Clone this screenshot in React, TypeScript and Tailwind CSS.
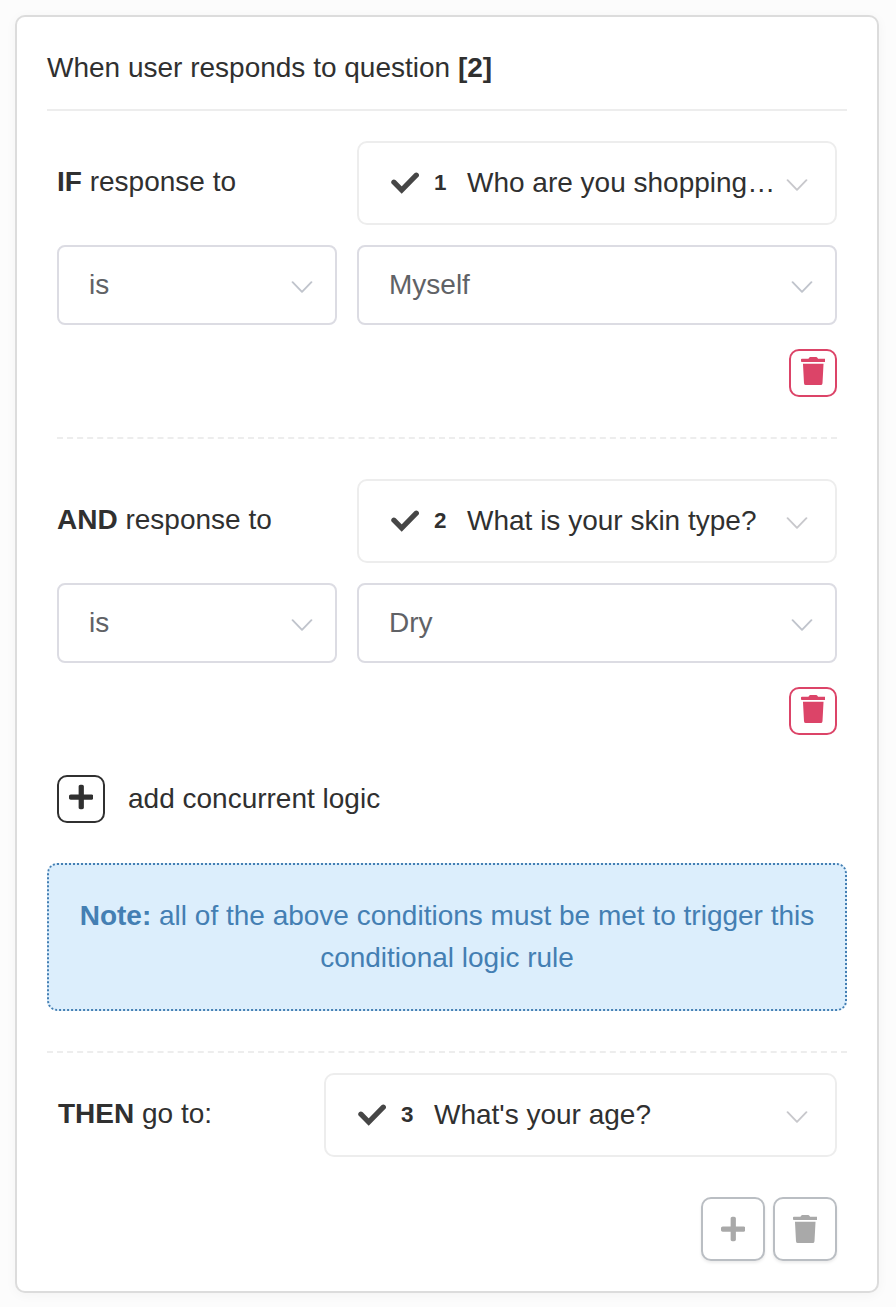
import type { ReactNode } from "react";
import { FaPlus } from "react-icons/fa";

function CheckIcon() {
  return (
    <svg viewBox="0 0 28 28" fill="none" className="size-7 shrink-0 text-[#464646]">
      <path d="M2.9 13.2L10.7 21L25.3 6.2" stroke="currentColor" strokeWidth="5.2" strokeLinecap="round" strokeLinejoin="miter" />
    </svg>
  );
}

function TrashIcon() {
  return (
    <svg viewBox="0 0 448 512" fill="currentColor" className="h-7 w-[24.5px] shrink-0">
      <path d="M16 32H136L152 8Q157 0 168 0H280Q291 0 296 8L312 32H432Q448 32 448 46V76Q448 90 432 90H16Q0 90 0 76V46Q0 32 16 32ZM36 122H412L393 478Q391 512 360 512H88Q57 512 55 478Z" />
    </svg>
  );
}

function Chevron({ className }: { className: string }) {
  return (
    <svg viewBox="0 0 22 12" fill="none" className={`h-3 w-[22px] shrink-0 ${className}`}>
      <path d="M1.6 1.2L11 10.8L20.4 1.2" stroke="currentColor" strokeWidth="1.9" strokeLinecap="round" strokeLinejoin="round" />
    </svg>
  );
}

function QuestionPicker({ number, text, className }: { number: number; text: string; className: string }) {
  return (
    <button type="button" className={`flex h-[84px] items-center rounded-[10px] border-2 border-[#ededed] bg-white pr-[27px] pl-8 text-left ${className}`}>
      <CheckIcon />
      <span className="ml-[15px] w-[33px] shrink-0 text-[22.4px] leading-8 font-bold tracking-[0.4px]">{number}</span>
      <span className="min-w-0 flex-1 whitespace-nowrap">{text}</span>
      <Chevron className="mt-[3px] text-[#c8c8cc]" />
    </button>
  );
}

function Select({ value, className }: { value: string; className: string }) {
  return (
    <button type="button" className={`flex h-20 items-center justify-between rounded-lg border-2 border-[#dcdce3] bg-white pr-[22px] pl-[30px] text-left text-[#606266] ${className}`}>
      <span>{value}</span>
      <Chevron className="mt-1 text-[#c0c4cc]" />
    </button>
  );
}

function Condition({ keyword, number, question, answer }: { keyword: string; number: number; question: string; answer: string }) {
  return (
    <section className="px-2.5">
      <div className="flex">
        <div className="w-[300px] pt-5"><b>{keyword}</b> response to</div>
        <QuestionPicker number={number} text={question} className="w-[480px]" />
      </div>
      <div className="mt-5 flex gap-5">
        <Select value="is" className="w-[280px]" />
        <Select value={answer} className="w-[480px]" />
      </div>
      <div className="mt-6 flex justify-end">
        <button type="button" aria-label="Delete condition" className="flex size-12 justify-center rounded-[10px] border-2 border-[#dc4468] pt-1.5 text-[#dc4468]">
          <TrashIcon />
        </button>
      </div>
    </section>
  );
}

function ActionButton({ label, children }: { label: string; children: ReactNode }) {
  return (
    <button type="button" aria-label={label} className="flex size-16 items-center justify-center rounded-[10px] border-2 border-[#babec3] bg-white text-[#a9a9a9] shadow-[0_2px_3px_rgba(0,0,0,0.08)]">
      {children}
    </button>
  );
}

export default function App() {
  return (
    <main className="h-[1307px] w-[896px] bg-[#fcfcfc] p-[15px] font-['Liberation_Sans',Arial,sans-serif] text-[28px] leading-[42px] text-[#303030]">
      <div className="h-[1278px] w-[864px] rounded-[10px] border-2 border-[#dcdcdc] bg-white px-[30px] pt-[30px] shadow-[0_2px_12px_rgba(0,0,0,0.04)]">
        <h1 className="h-16 border-b-2 border-[#ededed] font-normal"><span>When user responds to question <b>[2]</b></span></h1>
        <div className="pt-[30px]">
          <Condition keyword="IF" number={1} question="Who are you shopping…" answer="Myself" />
        </div>
        <div className="mx-2.5 my-10 border-t-2 border-dashed border-[#ededed]" />
        <Condition keyword="AND" number={2} question="What is your skin type?" answer="Dry" />
        <div className="mt-10 flex h-12 px-2.5">
          <button type="button" aria-label="Add concurrent logic" className="flex size-12 justify-center rounded-[10px] border-2 border-[#303030] pt-1.5">
            <FaPlus className="h-7 w-[24.5px]" />
          </button>
          <span className="ml-[23px] pt-[3px]">add concurrent logic</span>
        </div>
        <p className="mt-10 h-[148px] rounded-[10px] border-2 border-dotted border-[#447fb3] bg-[#dceefc] pt-[30px] text-center text-[#447fb3]">
          <b>Note:</b> all of the above conditions must be met to trigger this<br />conditional logic rule
        </p>
        <div className="mt-10 border-t-2 border-dashed border-[#ededed]" />
        <div className="mt-5 flex justify-between pr-2.5 pl-[11px]">
          <div className="pt-5"><b>THEN</b> go to:</div>
          <QuestionPicker number={3} text="What's your age?" className="w-[513px]" />
        </div>
        <div className="mt-10 flex justify-end gap-2 px-2.5">
          <ActionButton label="Add rule"><FaPlus className="h-7 w-[24.5px]" /></ActionButton>
          <ActionButton label="Delete rule"><TrashIcon /></ActionButton>
        </div>
      </div>
    </main>
  );
}
